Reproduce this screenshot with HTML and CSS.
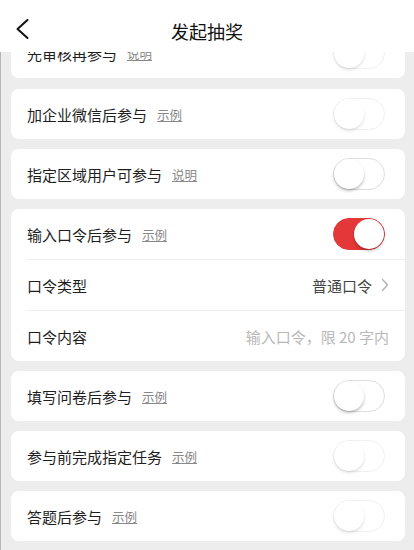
FILE: index.html
```html
<!doctype html>
<html>
<head>
    <title>发起抽奖</title>
    <link rel="stylesheet" href="styles.css">
    <meta name="viewport" content="width=device-width, initial-scale=1.0">
</head>
<body>
    <div class="header">
        <svg class="back" width="20" height="24" viewBox="0 0 20 24">
            <path d="M15.5 3 L5.5 12 L15.5 21" fill="none" stroke="#111" stroke-width="2" stroke-linecap="round" stroke-linejoin="round"/>
        </svg>
        <div class="title">发起抽奖</div>
    </div>

    <div class="list">
        <div class="card">
            <div class="row">
                <span class="label">先审核再参与</span><a class="link">说明</a>
                <span class="switch faded"><span class="knob"></span></span>
            </div>
        </div>
        <div class="card">
            <div class="row">
                <span class="label">加企业微信后参与</span><a class="link">示例</a>
                <span class="switch faded"><span class="knob"></span></span>
            </div>
        </div>
        <div class="card">
            <div class="row">
                <span class="label">指定区域用户可参与</span><a class="link">说明</a>
                <span class="switch"><span class="knob"></span></span>
            </div>
        </div>
        <div class="card">
            <div class="row">
                <span class="label">输入口令后参与</span><a class="link">示例</a>
                <span class="switch on"><span class="knob"></span></span>
            </div>
            <div class="row line">
                <span class="label">口令类型</span>
                <span class="value">普通口令</span>
                <svg class="arrow" width="8" height="14" viewBox="0 0 8 14">
                    <path d="M1.5 1.5 L6.5 7 L1.5 12.5" fill="none" stroke="#b0b0b0" stroke-width="1.3" stroke-linecap="round" stroke-linejoin="round"/>
                </svg>
            </div>
            <div class="row line">
                <span class="label">口令内容</span>
                <input class="input" type="text" placeholder="输入口令，限 20 字内">
            </div>
        </div>
        <div class="card">
            <div class="row">
                <span class="label">填写问卷后参与</span><a class="link">示例</a>
                <span class="switch"><span class="knob"></span></span>
            </div>
        </div>
        <div class="card">
            <div class="row">
                <span class="label">参与前完成指定任务</span><a class="link">示例</a>
                <span class="switch faded"><span class="knob"></span></span>
            </div>
        </div>
        <div class="card">
            <div class="row">
                <span class="label">答题后参与</span><a class="link">示例</a>
                <span class="switch faded"><span class="knob"></span></span>
            </div>
        </div>
    </div>
</body>
</html>
```

FILE: styles.css
```css
body {
    font-family: "Noto Sans CJK SC", "Noto Sans", sans-serif;
    margin: 0;
    padding: 0;
    background-color: #ededed;
    color: #222;
    border-left: 1px solid #b5b5b5;
    min-height: 550px;
    box-sizing: border-box;
}
.header {
    position: fixed;
    top: 0;
    left: 0;
    right: 0;
    height: 52px;
    background-color: #fff;
    z-index: 10;
    display: flex;
    align-items: center;
    justify-content: center;
}
.back {
    position: absolute;
    left: 12px;
    top: 17px;
}
.title {
    font-size: 18px;
    color: #111;
    margin-top: 10px;
}
.list {
    padding: 28px 9px 10px 10px;
    display: flex;
    flex-direction: column;
    gap: 10px;
}
.card {
    background-color: #fff;
    border-radius: 8px;
}
.card:nth-child(2) {
    margin-top: 1px;
}
.row {
    height: 50px;
    display: flex;
    align-items: center;
    padding: 0 16px;
}
.row.line {
    height: 50px;
    margin-left: 15px;
    padding-left: 1px;
    border-top: 1px solid #eeeeee;
}
.label {
    font-size: 15px;
    color: #1e1e1e;
}
.link {
    font-size: 12.5px;
    color: #888;
    text-decoration: underline;
    margin-left: 10px;
}
.value {
    margin-left: auto;
    font-size: 15px;
    color: #444;
}
.arrow {
    margin-left: 9px;
}
.input {
    margin-left: auto;
    border: none;
    outline: none;
    background: transparent;
    text-align: right;
    font-family: inherit;
    font-size: 15px;
    color: #333;
    width: 200px;
    padding: 0;
}
.input::placeholder {
    color: #b8b8b8;
}
.switch {
    margin-left: auto;
    margin-right: 4px;
    width: 52px;
    height: 32px;
    box-sizing: border-box;
    border: 1px solid #dedede;
    border-radius: 16px;
    background-color: #fff;
    display: flex;
    align-items: center;
    padding: 0;
}
.switch .knob {
    width: 30px;
    height: 30px;
    border-radius: 50%;
    background-color: #fff;
    box-shadow: 0 2px 3px rgba(0, 0, 0, 0.25);
}
.switch.on {
    background-color: #e3373a;
    border-color: #e3373a;
    justify-content: flex-end;
}
.switch.faded {
    opacity: 0.45;
}
```
